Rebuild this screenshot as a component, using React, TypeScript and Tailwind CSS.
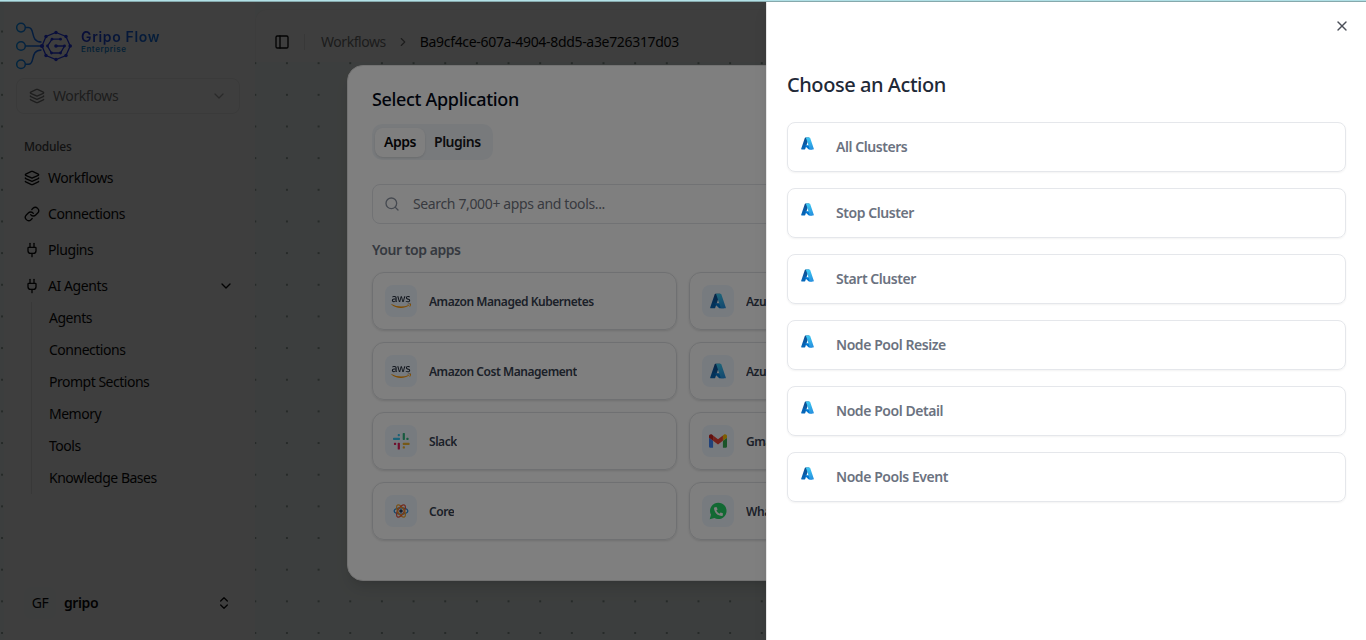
import React from "react";
import {
  ChevronDown,
  ChevronRight,
  ChevronsUpDown,
  Layers,
  Link,
  PanelLeft,
  Plug,
  Search,
  X,
} from "lucide-react";
import { FaAws, FaPhoneAlt } from "react-icons/fa";

function BrandMark() {
  return (
    <svg width="58" height="48" viewBox="0 0 58 48" fill="none" className="shrink-0">
      <defs>
        <linearGradient id="brand" gradientUnits="userSpaceOnUse" x1="0" y1="0" x2="44" y2="0">
          <stop offset="0" stopColor="#0a9cff" />
          <stop offset="1" stopColor="#2438f0" />
        </linearGradient>
      </defs>
      <g stroke="url(#brand)" strokeWidth="1.5">
        <circle cx="5" cy="5.600" r="4.300" />
        <circle cx="5" cy="24" r="4.300" />
        <circle cx="5" cy="42.300" r="4.300" />
        <path d="M9.500 5.600h3c7 0 1 14.400 13 14.400M9.500 24.050h16M9.500 42.300h3c7 0 1-14.400 13-14.400" />
      </g>
      <path
        d="M40 10.500L50 14.500L54.200 24L50 33.500L40 37.500L30 33.500L26 24L30 14.500Z"
        stroke="#2438f0"
        strokeWidth="1.300"
      />
      <path d="M44.500 17.200H36L31.500 24l4 7h9l4-7h-8" stroke="#2438f0" strokeWidth="1.300" />
      <g fill="#2438f0">
        <circle cx="40" cy="10.500" r="1.700" />
        <circle cx="50" cy="14.500" r="1.700" />
        <circle cx="54.200" cy="24" r="1.800" />
        <circle cx="50" cy="33.500" r="1.700" />
        <circle cx="40" cy="37.500" r="1.700" />
        <circle cx="30" cy="33.500" r="1.700" />
        <circle cx="26" cy="24" r="2.100" />
        <circle cx="30" cy="14.500" r="1.700" />
        <circle cx="44.500" cy="17.200" r="1.400" />
        <circle cx="36" cy="17.200" r="1.400" />
        <circle cx="31.500" cy="24" r="1.400" />
        <circle cx="35.500" cy="31" r="1.400" />
        <circle cx="44.500" cy="31" r="1.400" />
        <circle cx="48.500" cy="24" r="1.400" />
        <circle cx="40" cy="24" r="1.800" />
      </g>
    </svg>
  );
}

function AzureIcon({ size }: { size: number }) {
  const id = React.useId();
  return (
    <svg width={size} height={size} viewBox="3 5 90 86" className="shrink-0">
      <defs>
        <linearGradient id={id + "a"} x1="0.6" y1="0" x2="0.3" y2="1">
          <stop offset="0" stopColor="#114a8b" />
          <stop offset="1" stopColor="#0669bc" />
        </linearGradient>
        <linearGradient id={id + "b"} x1="0.3" y1="0" x2="0.6" y2="1">
          <stop offset="0" stopColor="#3ccbf4" />
          <stop offset="1" stopColor="#2892df" />
        </linearGradient>
      </defs>
      <path
        fill={`url(#${id}a)`}
        d="M33.338 6.544h26.038l-27.030 80.087a4.152 4.152 0 0 1-3.933 2.824H8.149a4.145 4.145 0 0 1-3.928-5.470L29.404 9.368a4.152 4.152 0 0 1 3.934-2.825z"
      />
      <path
        fill="#0078d4"
        d="M71.175 60.261h-41.290a1.911 1.911 0 0 0-1.305 3.309l26.532 24.764a4.171 4.171 0 0 0 2.846 1.121h23.380z"
      />
      <path
        fill={`url(#${id}b)`}
        d="M66.595 9.364a4.145 4.145 0 0 0-3.928-2.820H33.648a4.146 4.146 0 0 1 3.928 2.820l25.184 74.620a4.146 4.146 0 0 1-3.928 5.472h29.020a4.146 4.146 0 0 0 3.927-5.472z"
      />
    </svg>
  );
}

function AwsIcon() {
  return (
    <span className="mt-px grid size-5">
      <FaAws className="col-start-1 row-start-1 size-5 text-[#252f3e] [clip-path:inset(0_0_40%_0)]" />
      <FaAws className="col-start-1 row-start-1 size-5 text-[#ff9900] [clip-path:inset(60%_0_0_0)]" />
    </span>
  );
}

function SlackIcon() {
  return (
    <svg width="17" height="17" viewBox="0 0 17 17">
      <g fill="#36c5f0">
        <rect x="4.700" y="1" width="2.200" height="2.200" rx="0.700" />
        <rect x="0" y="4.700" width="7" height="2.200" rx="0.700" />
      </g>
      <g fill="#2eb67d">
        <rect x="9.700" y="0" width="2.200" height="6.900" rx="0.700" />
        <rect x="13.300" y="4.700" width="2.300" height="2.200" rx="0.700" />
      </g>
      <g fill="#e01e5a">
        <rect x="0.900" y="9.700" width="2.300" height="2.200" rx="0.700" />
        <rect x="4.700" y="9.700" width="2.200" height="6.900" rx="0.700" />
      </g>
      <g fill="#ecb22e">
        <rect x="9.700" y="9.700" width="6.900" height="2.200" rx="0.700" />
        <rect x="9.700" y="13.300" width="2.200" height="2.300" rx="0.700" />
      </g>
    </svg>
  );
}

function GmailIcon() {
  return (
    <svg width="18" height="14" viewBox="52 42 88 66">
      <path fill="#4285f4" d="M58 108h14V74L52 59v43c0 3.320 2.690 6 6 6" />
      <path fill="#34a853" d="M120 108h14c3.320 0 6-2.690 6-6V59l-20 15" />
      <path fill="#fbbc04" d="M120 48v26l20-15v-8c0-7.420-8.470-11.650-14.400-7.200" />
      <path fill="#ea4335" d="M72 74V48l24 18 24-18v26L96 92" />
      <path fill="#c5221f" d="M52 51v8l20 15V48l-5.600-4.200c-5.940-4.450-14.400-.220-14.400 7.200" />
    </svg>
  );
}

function CoreIcon() {
  return (
    <svg width="16" height="16" viewBox="0 0 16 16" fill="none" strokeWidth="1.200">
      <ellipse cx="8" cy="8" rx="6.900" ry="3.200" stroke="#1c86d8" />
      <ellipse cx="8" cy="8" rx="6.900" ry="3.200" stroke="#f2a32c" transform="rotate(60 8 8)" />
      <ellipse cx="8" cy="8" rx="6.900" ry="3.200" stroke="#e5533d" transform="rotate(120 8 8)" />
      <circle cx="8" cy="8" r="3.500" stroke="#f08a2c" />
      <circle cx="8" cy="8" r="1.800" fill="#253858" />
    </svg>
  );
}

function WhatsAppIcon() {
  return (
    <span className="grid size-[18px] place-items-center">
      <svg width="18" height="18" viewBox="0 0 18 18" className="col-start-1 row-start-1">
        <path fill="#25d366" d="M9.300 .700a8.200 8.200 0 1 1-3.900 15.400L.700 17.300l1.300-4.500A8.200 8.200 0 0 1 9.300 .700z" />
      </svg>
      <FaPhoneAlt className="col-start-1 row-start-1 ml-px size-[9px] -scale-x-100 rotate-90 text-white" />
    </span>
  );
}

const modules = [
  { label: "Workflows", icon: Layers },
  { label: "Connections", icon: Link },
  { label: "Plugins", icon: Plug },
  { label: "AI Agents", icon: Plug, open: true },
];

const agentLinks = ["Agents", "Connections", "Prompt Sections", "Memory", "Tools", "Knowledge Bases"];

const apps = [
  { name: "Amazon Managed Kubernetes", icon: <AwsIcon /> },
  { name: "Azure Kubernetes", icon: <AzureIcon size={16} /> },
  { name: "Amazon Cost Management", icon: <AwsIcon /> },
  { name: "Azure Cost Management", icon: <AzureIcon size={16} /> },
  { name: "Slack", icon: <SlackIcon /> },
  { name: "Gmail", icon: <GmailIcon /> },
  { name: "Core", icon: <CoreIcon /> },
  { name: "WhatsApp", icon: <WhatsAppIcon /> },
];

const actions = [
  "All Clusters",
  "Stop Cluster",
  "Start Cluster",
  "Node Pool Resize",
  "Node Pool Detail",
  "Node Pools Event",
];

function Sidebar() {
  return (
    <aside className="flex w-[251px] shrink-0 flex-col bg-[#fafafa]">
      <div className="mt-[22px] flex h-12 items-center pl-3">
        <BrandMark />
        <div className="-mt-[9px] ml-[7px] flex flex-col font-['Inter',sans-serif]">
          <span className="bg-linear-to-r from-[#2438e0] to-[#1478e8] bg-clip-text text-[14px]/[16px] font-semibold tracking-[0.65px] text-transparent">
            Gripo Flow
          </span>
          <span className="text-[8px]/[9px] font-semibold tracking-[0.55px] text-[#1488d8]">Enterprise</span>
        </div>
      </div>
      <div className="mt-2 mr-[15px] ml-3 flex h-9 items-center rounded-lg border border-[#e8e8e8] px-3 text-[#777]">
        <Layers className="size-4" />
        <span className="ml-2 tracking-[-0.4px]">Workflows</span>
        <ChevronDown className="ml-auto size-4 opacity-60" />
      </div>
      <div className="mt-[25px] ml-5 text-xs/4 font-medium tracking-[-0.25px] text-[#4a4a4a]">Modules</div>
      <nav className="mt-[5px] pr-[21px] pl-5">
        {modules.map(({ label, icon: Icon, open }) => (
          <div key={label} className="flex h-9 items-center gap-2">
            <Icon className="size-4" />
            <span className="tracking-[-0.42px]">{label}</span>
            {open && <ChevronDown className="ml-auto size-4" />}
          </div>
        ))}
        <div className="-mt-0.5 ml-[7px] border-l border-[#e2e2e2] pl-[17px]">
          {agentLinks.map((label) => (
            <div key={label} className="flex h-8 items-center tracking-[-0.49px]">
              {label}
            </div>
          ))}
        </div>
      </nav>
      <div className="mt-auto mb-[21px] ml-5 flex h-8 items-center pr-[23px]">
        <span className="grid size-8 place-items-center rounded-lg bg-[#f4fbf8] tracking-[-0.6px]">GF</span>
        <span className="ml-2 font-semibold tracking-[-0.4px]">gripo</span>
        <ChevronsUpDown className="ml-auto size-4" />
      </div>
    </aside>
  );
}

function ApplicationDialog() {
  return (
    <section className="absolute top-[65px] left-[347px] flex h-[516px] w-[672px] flex-col rounded-2xl border border-[#e4e4e4] bg-white px-6 shadow-lg">
      <h2 className="mt-[19px] text-lg/7 font-medium tracking-[-0.33px] text-[#020817]">Select Application</h2>
      <div className="mt-[11px] flex h-9 w-[121px] items-center rounded-[10px] bg-[#f1f5f9] px-[3px] font-semibold tracking-[-0.48px]">
        <span className="grid h-[29px] w-[50px] place-items-center rounded-lg bg-white text-[#09090b] shadow-sm">Apps</span>
        <span className="ml-[9px] text-[#18181b]">Plugins</span>
      </div>
      <div className="mt-6 flex h-10 shrink-0 items-center rounded-lg border border-[#e2e4e8] pr-3 pl-[11px] text-[#71757e]">
        <Search className="size-4 text-[#8b93a1]" />
        <span className="ml-[13px] tracking-[-0.36px]">Search 7,000+ apps and tools...</span>
      </div>
      <h3 className="mt-4 text-sm/5 font-semibold tracking-[-0.45px] text-[#6b7280]">Your top apps</h3>
      <div className="mt-3 grid grid-cols-2 gap-3">
        {apps.map(({ name, icon }) => (
          <div
            key={name}
            className="flex h-[58px] items-center rounded-xl border border-[#dfe1e4] px-3 shadow-sm"
          >
            <span className="grid size-8 place-items-center rounded-lg bg-[#eff6ff]">{icon}</span>
            <span className="mt-px ml-3 truncate text-xs font-semibold tracking-[-0.46px] text-[#374151]">{name}</span>
          </div>
        ))}
      </div>
    </section>
  );
}

function ActionSheet() {
  return (
    <section className="absolute top-0 right-0 flex h-full w-[600px] flex-col border-l border-[#e5e5e5] bg-white px-5 shadow-lg">
      <button className="mt-[18px] mr-[-4px] self-end" aria-label="Close">
        <X className="size-4 text-[#4b4f58]" />
      </button>
      <h2 className="mt-[37px] text-xl/7 font-medium tracking-[-0.44px] text-[#1f2937]">Choose an Action</h2>
      <div className="mt-[23px] flex flex-col gap-4">
        {actions.map((name) => (
          <div
            key={name}
            className="flex h-[50px] items-center rounded-lg border border-[#e5e7eb] pl-[13px] shadow-xs"
          >
            <span className="-mt-[7px]">
              <AzureIcon size={13} />
            </span>
            <span className="ml-[22px] font-semibold tracking-[-0.44px] text-[#6b7280]">{name}</span>
          </div>
        ))}
      </div>
    </section>
  );
}

export default function App() {
  return (
    <div className="relative h-[640px] w-[1366px] overflow-hidden bg-[#f2fbf8] bg-[radial-gradient(circle,#9aa9a4_0.8px,transparent_1.2px)] bg-size-[31.67px_31.67px] bg-position-[-13.800px_15.700px] font-['Noto_Sans','Open_Sans',sans-serif] text-sm text-[#0a0a0a]">
      <div className="flex h-full pl-1">
        <Sidebar />
        <header className="mt-[9px] flex h-[53px] flex-1 items-center rounded-tl-xl border-t border-l border-[#f2f2f2] bg-[#fafafa] pt-3 pl-[18px]">
          <PanelLeft className="size-4" />
          <span className="ml-[14px] h-4 w-px bg-[#e0e0e0]" />
          <span className="ml-4 tracking-[-0.45px] text-[#737373]">Workflows</span>
          <ChevronRight className="mr-[10px] ml-[10px] size-3.5 text-[#737373]" />
          <span className="tracking-[-0.32px]">Ba9cf4ce-607a-4904-8dd5-a3e726317d03</span>
        </header>
      </div>
      <div className="absolute inset-0 bg-black/50" />
      <ApplicationDialog />
      <div className="absolute inset-0 bg-black/50" />
      <ActionSheet />
      <div className="absolute inset-x-0 top-0 h-0.5 border-b border-[#86a9ac] bg-[#b0e0e6]" />
    </div>
  );
}
